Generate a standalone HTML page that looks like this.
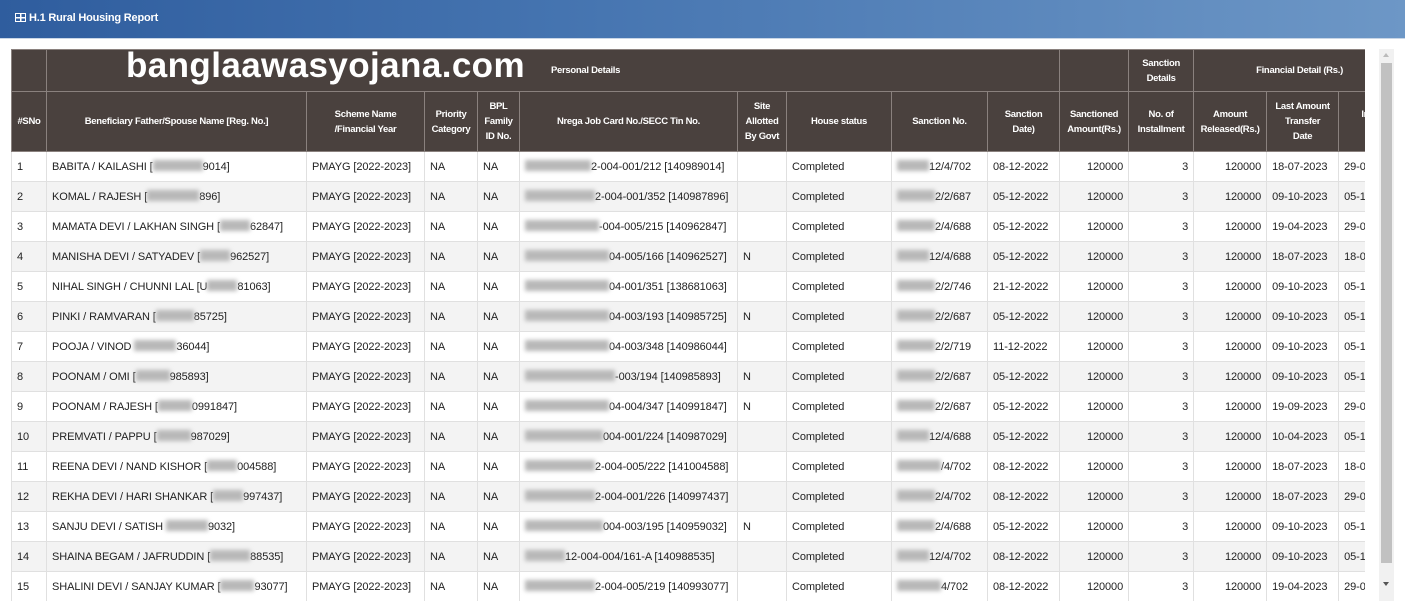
<!DOCTYPE html>
<html><head><meta charset="utf-8"><style>
*{margin:0;padding:0;box-sizing:border-box}
body{width:1405px;height:604px;background:#fff;font-family:"Liberation Sans",sans-serif;position:relative;overflow:hidden}
.bar{position:absolute;left:0;top:0;width:1405px;height:39px;background:linear-gradient(90deg,#2f5d9e 0%,#4574b0 40%,#6d97c6 100%);border-bottom:1px solid #c9d6e6}
.bar span{position:absolute;left:15px;top:12px;color:#fff;font-size:11px;font-weight:bold;letter-spacing:-0.2px}
.ic{display:inline-block;width:11px;height:9px;border:1.5px solid #fff;margin-right:3px;vertical-align:-1px;background:linear-gradient(#fff,#fff) 50% 0/1.5px 100% no-repeat,linear-gradient(#fff,#fff) 0 50%/100% 1.5px no-repeat}
.wrap{position:absolute;left:11px;top:49px;width:1354px;height:552px;overflow:hidden}
table{border-collapse:collapse;table-layout:fixed;width:1417px}
th{background:#4a413e;color:#fff;font-size:9.5px;font-weight:bold;border:1px solid #8a817e;text-align:center;line-height:15px;letter-spacing:-0.3px;overflow:hidden}
td{font-size:11px;color:#222;height:30px;padding:0 5px;border:1px solid #e0e0e0;white-space:nowrap;overflow:hidden;letter-spacing:-0.1px}
tr:nth-child(even) td{background:#f3f3f3}
.r{text-align:right}
.b{display:inline-block;height:11px;background:#b8b8b8;filter:blur(2px);vertical-align:-1px}
.wm{position:absolute;left:126px;top:46px;color:#fff;font-size:35px;font-weight:bold;letter-spacing:0.4px}
.sb{position:absolute;left:1379px;top:49px;width:15px;height:552px;background:#f1f1f1}
.th{position:absolute;left:1381px;top:63px;width:11px;height:500px;background:#c1c1c1}
.ar{position:absolute;left:1383px;top:582px;width:0;height:0;border-left:3px solid transparent;border-right:3px solid transparent;border-top:4px solid #555}
.ar2{position:absolute;left:1383px;top:53px;width:0;height:0;border-left:3px solid transparent;border-right:3px solid transparent;border-bottom:4px solid #bbb}
</style></head><body>
<div class="bar"><span><i class="ic"></i>H.1 Rural Housing Report</span></div>
<div class="wrap">
<table>
<colgroup><col style="width:35px"><col style="width:260px"><col style="width:118px"><col style="width:53px"><col style="width:42px"><col style="width:218px"><col style="width:49px"><col style="width:105px"><col style="width:96px"><col style="width:72px"><col style="width:69px"><col style="width:65px"><col style="width:73px"><col style="width:72px"><col style="width:90px"></colgroup>
<tr style="height:42px"><th></th><th colspan="9" style="text-align:left;padding-left:504px">Personal Details</th><th></th><th>Sanction<br>Details</th><th colspan="3" style="text-align:left;padding-left:62px">Financial Detail (Rs.)</th></tr>
<tr style="height:60px"><th>#SNo</th><th>Beneficiary Father/Spouse Name [Reg. No.]</th><th>Scheme Name<br>/Financial Year</th><th>Priority<br>Category</th><th>BPL<br>Family<br>ID No.</th><th>Nrega Job Card No./SECC Tin No.</th><th>Site<br>Allotted<br>By Govt</th><th>House status</th><th>Sanction No.</th><th>Sanction<br>Date)</th><th>Sanctioned<br>Amount(Rs.)</th><th>No. of<br>Installment</th><th>Amount<br>Released(Rs.)</th><th>Last Amount<br>Transfer<br>Date</th><th>Inspection<br>Date</th></tr>
<tr><td>1</td><td>BABITA / KAILASHI [<span class="b" style="width:50px"></span>9014]</td><td>PMAYG [2022-2023]</td><td>NA</td><td>NA</td><td><span class="b" style="width:66px"></span>2-004-001/212 [140989014]</td><td></td><td>Completed</td><td><span class="b" style="width:32px"></span>12/4/702</td><td>08-12-2022</td><td class="r">120000</td><td class="r">3</td><td class="r">120000</td><td>18-07-2023</td><td>29-0</td></tr>
<tr><td>2</td><td>KOMAL / RAJESH [<span class="b" style="width:52px"></span>896]</td><td>PMAYG [2022-2023]</td><td>NA</td><td>NA</td><td><span class="b" style="width:70px"></span>2-004-001/352 [140987896]</td><td></td><td>Completed</td><td><span class="b" style="width:38px"></span>2/2/687</td><td>05-12-2022</td><td class="r">120000</td><td class="r">3</td><td class="r">120000</td><td>09-10-2023</td><td>05-1</td></tr>
<tr><td>3</td><td>MAMATA DEVI / LAKHAN SINGH [<span class="b" style="width:30px"></span>62847]</td><td>PMAYG [2022-2023]</td><td>NA</td><td>NA</td><td><span class="b" style="width:74px"></span>-004-005/215 [140962847]</td><td></td><td>Completed</td><td><span class="b" style="width:38px"></span>2/4/688</td><td>05-12-2022</td><td class="r">120000</td><td class="r">3</td><td class="r">120000</td><td>19-04-2023</td><td>29-0</td></tr>
<tr><td>4</td><td>MANISHA DEVI / SATYADEV [<span class="b" style="width:30px"></span>962527]</td><td>PMAYG [2022-2023]</td><td>NA</td><td>NA</td><td><span class="b" style="width:84px"></span>04-005/166 [140962527]</td><td>N</td><td>Completed</td><td><span class="b" style="width:32px"></span>12/4/688</td><td>05-12-2022</td><td class="r">120000</td><td class="r">3</td><td class="r">120000</td><td>18-07-2023</td><td>18-0</td></tr>
<tr><td>5</td><td>NIHAL SINGH / CHUNNI LAL [U<span class="b" style="width:30px"></span>81063]</td><td>PMAYG [2022-2023]</td><td>NA</td><td>NA</td><td><span class="b" style="width:84px"></span>04-001/351 [138681063]</td><td></td><td>Completed</td><td><span class="b" style="width:38px"></span>2/2/746</td><td>21-12-2022</td><td class="r">120000</td><td class="r">3</td><td class="r">120000</td><td>09-10-2023</td><td>05-1</td></tr>
<tr><td>6</td><td>PINKI / RAMVARAN [<span class="b" style="width:38px"></span>85725]</td><td>PMAYG [2022-2023]</td><td>NA</td><td>NA</td><td><span class="b" style="width:84px"></span>04-003/193 [140985725]</td><td>N</td><td>Completed</td><td><span class="b" style="width:38px"></span>2/2/687</td><td>05-12-2022</td><td class="r">120000</td><td class="r">3</td><td class="r">120000</td><td>09-10-2023</td><td>05-1</td></tr>
<tr><td>7</td><td>POOJA / VINOD <span class="b" style="width:42px"></span>36044]</td><td>PMAYG [2022-2023]</td><td>NA</td><td>NA</td><td><span class="b" style="width:84px"></span>04-003/348 [140986044]</td><td></td><td>Completed</td><td><span class="b" style="width:38px"></span>2/2/719</td><td>11-12-2022</td><td class="r">120000</td><td class="r">3</td><td class="r">120000</td><td>09-10-2023</td><td>05-1</td></tr>
<tr><td>8</td><td>POONAM / OMI [<span class="b" style="width:34px"></span>985893]</td><td>PMAYG [2022-2023]</td><td>NA</td><td>NA</td><td><span class="b" style="width:90px"></span>-003/194 [140985893]</td><td>N</td><td>Completed</td><td><span class="b" style="width:38px"></span>2/2/687</td><td>05-12-2022</td><td class="r">120000</td><td class="r">3</td><td class="r">120000</td><td>09-10-2023</td><td>05-1</td></tr>
<tr><td>9</td><td>POONAM / RAJESH [<span class="b" style="width:34px"></span>0991847]</td><td>PMAYG [2022-2023]</td><td>NA</td><td>NA</td><td><span class="b" style="width:84px"></span>04-004/347 [140991847]</td><td>N</td><td>Completed</td><td><span class="b" style="width:38px"></span>2/2/687</td><td>05-12-2022</td><td class="r">120000</td><td class="r">3</td><td class="r">120000</td><td>19-09-2023</td><td>29-0</td></tr>
<tr><td>10</td><td>PREMVATI / PAPPU [<span class="b" style="width:34px"></span>987029]</td><td>PMAYG [2022-2023]</td><td>NA</td><td>NA</td><td><span class="b" style="width:78px"></span>004-001/224 [140987029]</td><td></td><td>Completed</td><td><span class="b" style="width:32px"></span>12/4/688</td><td>05-12-2022</td><td class="r">120000</td><td class="r">3</td><td class="r">120000</td><td>10-04-2023</td><td>05-1</td></tr>
<tr><td>11</td><td>REENA DEVI / NAND KISHOR [<span class="b" style="width:30px"></span>004588]</td><td>PMAYG [2022-2023]</td><td>NA</td><td>NA</td><td><span class="b" style="width:70px"></span>2-004-005/222 [141004588]</td><td></td><td>Completed</td><td><span class="b" style="width:44px"></span>/4/702</td><td>08-12-2022</td><td class="r">120000</td><td class="r">3</td><td class="r">120000</td><td>18-07-2023</td><td>18-0</td></tr>
<tr><td>12</td><td>REKHA DEVI / HARI SHANKAR [<span class="b" style="width:30px"></span>997437]</td><td>PMAYG [2022-2023]</td><td>NA</td><td>NA</td><td><span class="b" style="width:70px"></span>2-004-001/226 [140997437]</td><td></td><td>Completed</td><td><span class="b" style="width:38px"></span>2/4/702</td><td>08-12-2022</td><td class="r">120000</td><td class="r">3</td><td class="r">120000</td><td>18-07-2023</td><td>29-0</td></tr>
<tr><td>13</td><td>SANJU DEVI / SATISH <span class="b" style="width:42px"></span>9032]</td><td>PMAYG [2022-2023]</td><td>NA</td><td>NA</td><td><span class="b" style="width:78px"></span>004-003/195 [140959032]</td><td>N</td><td>Completed</td><td><span class="b" style="width:38px"></span>2/4/688</td><td>05-12-2022</td><td class="r">120000</td><td class="r">3</td><td class="r">120000</td><td>09-10-2023</td><td>05-1</td></tr>
<tr><td>14</td><td>SHAINA BEGAM / JAFRUDDIN [<span class="b" style="width:40px"></span>88535]</td><td>PMAYG [2022-2023]</td><td>NA</td><td>NA</td><td><span class="b" style="width:40px"></span>12-004-004/161-A [140988535]</td><td></td><td>Completed</td><td><span class="b" style="width:32px"></span>12/4/702</td><td>08-12-2022</td><td class="r">120000</td><td class="r">3</td><td class="r">120000</td><td>09-10-2023</td><td>05-1</td></tr>
<tr><td>15</td><td>SHALINI DEVI / SANJAY KUMAR [<span class="b" style="width:34px"></span>93077]</td><td>PMAYG [2022-2023]</td><td>NA</td><td>NA</td><td><span class="b" style="width:70px"></span>2-004-005/219 [140993077]</td><td></td><td>Completed</td><td><span class="b" style="width:44px"></span>4/702</td><td>08-12-2022</td><td class="r">120000</td><td class="r">3</td><td class="r">120000</td><td>19-04-2023</td><td>29-0</td></tr>
</table>
</div>
<div class="wm">banglaawasyojana.com</div>
<div class="sb"></div><div class="th"></div><div class="ar2"></div><div class="ar"></div>
</body></html>
